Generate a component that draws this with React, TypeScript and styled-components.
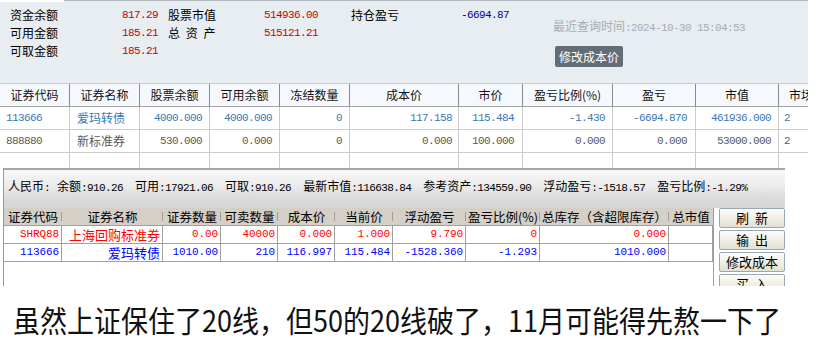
import React from "react";
import styled, { createGlobalStyle } from "styled-components";

const CJK = `"Noto Sans CJK SC", "Liberation Sans", sans-serif`;
const MONO = `"Liberation Mono", "DejaVu Sans Mono", monospace`;

const GlobalStyle = createGlobalStyle`
  html, body { margin: 0; padding: 0; background: #ffffff; }
  body { font-family: ${CJK}; }
  * { box-sizing: border-box; }
`;

type Align = "left" | "right" | "center";
type Tone = "blue" | "grey" | "red" | "navy" | "none";

const toneColor: Record<Tone, string> = {
  blue: "#3a77b3",
  grey: "#5a5a5a",
  red: "#ff0000",
  navy: "#0000ff",
  none: "#000000",
};

const Page = styled.div`
  width: 819px;
  height: 353px;
  overflow: hidden;
  background: #ffffff;
  display: flex;
  flex-direction: column;
`;

/* ---------- top summary panel ---------- */
const TopPanel = styled.section`
  width: 808px;
  height: 83px;
  flex-shrink: 0;
  background: #e8edf1;
  display: flex;
  flex-direction: column;
`;

const TabEdge = styled.div`
  display: flex;
  height: 2px;
`;

const TabGap = styled.div`
  width: 64px;
  background: #ffffff;
`;

const TabLine = styled.div`
  flex: 1;
  border-top: 1px solid #b3bac2;
`;

const SummaryBody = styled.div`
  display: flex;
  padding: 4px 0 0 10px;
`;

const SummaryGrid = styled.div`
  display: grid;
  grid-template-columns: 60px 88px 70px 90px 93px 98px;
  grid-auto-rows: 18px;
  align-items: center;
`;

const SumLabel = styled.span<{ $indent?: number }>`
  font-family: ${CJK};
  font-size: 12px;
  line-height: 18px;
  color: #000;
  padding-left: ${(p) => p.$indent ?? 0}px;
  white-space: nowrap;
  word-spacing: 3px;
`;

const SumValue = styled.span<{ $tone: Tone }>`
  font-family: ${MONO};
  font-size: 11px;
  letter-spacing: -0.6px;
  line-height: 18px;
  text-align: right;
  color: ${(p) => (p.$tone === "navy" ? "#0000a8" : "#c80000")};
  white-space: nowrap;
`;

const InfoColumn = styled.div`
  display: flex;
  flex-direction: column;
  align-items: flex-start;
  margin-left: 44px;
  padding-top: 10px;
`;

const QueryTime = styled.div`
  color: #a6aeb6;
  line-height: 16px;
  white-space: nowrap;
`;

const QLabel = styled.span`
  font-family: ${CJK};
  font-size: 12px;
`;

const QNum = styled.span`
  font-family: ${MONO};
  font-size: 11px;
  letter-spacing: -0.6px;
`;

const CostButton = styled.button`
  margin: 10px 0 0 2px;
  height: 21px;
  padding: 0 4px;
  border: none;
  border-radius: 2px;
  background: #636d77;
  color: #ffffff;
  font-family: ${CJK};
  font-size: 12px;
  line-height: 21px;
  display: inline-flex;
  align-items: center;
`;

/* ---------- position table ---------- */
const Table1Wrap = styled.section`
  width: 808px;
  height: 85px;
  flex-shrink: 0;
  overflow: hidden;
  border-top: 1px solid #c6ccd2;
`;

const GridRow = styled.div<{ $cols: string; $h: number }>`
  display: grid;
  grid-template-columns: ${(p) => p.$cols};
  height: ${(p) => p.$h}px;
  width: max-content;
`;

const T1Head = styled.div`
  background: #f5f9fd;
  border-right: 1px solid #8a8a8a;
  border-bottom: 1px solid #a4a4a4;
  font-family: ${CJK};
  font-size: 12px;
  line-height: 22px;
  text-align: center;
  color: #111;
  white-space: nowrap;
  overflow: hidden;
`;

const T1Cell = styled.div<{ $align: Align; $mono: boolean; $pad: number; $tone: Tone }>`
  border-right: 1px solid #cbcbcb;
  border-bottom: 1px solid #cbcbcb;
  background: #ffffff;
  line-height: 22px;
  white-space: nowrap;
  overflow: hidden;
  text-align: ${(p) => p.$align};
  padding-left: ${(p) => (p.$align === "left" ? p.$pad : 0)}px;
  padding-right: ${(p) => (p.$align === "right" ? p.$pad : 0)}px;
  font-family: ${(p) => (p.$mono ? MONO : CJK)};
  font-size: ${(p) => (p.$mono ? 11 : 12)}px;
  letter-spacing: ${(p) => (p.$mono ? "-0.6px" : "0")};
  color: ${(p) => toneColor[p.$tone]};
`;

/* ---------- lower trade window ---------- */
const LowerWindow = styled.section`
  margin-left: 3px;
  width: 782px;
  height: 118px;
  flex-shrink: 0;
  border-left: 1px solid #9a9a9a;
  border-top: 2px solid #a6a6a6;
  display: flex;
  flex-direction: column;
  background: #ffffff;
`;

const StatusBar = styled.div`
  height: 38px;
  flex-shrink: 0;
  display: flex;
  align-items: flex-start;
  padding: 6px 0 0 4px;
  background: linear-gradient(#f7f7f7 0%, #ececec 40%, #dadada 75%, #d6d6d6 100%);
  line-height: 16px;
  white-space: nowrap;
`;

const Currency = styled.span`
  margin-right: 7px;
`;

const StatusItems = styled.div`
  display: flex;
  gap: 12px;
`;

const SLabel = styled.span`
  font-family: ${CJK};
  font-size: 12px;
  color: #000;
`;

const SNum = styled.span`
  font-family: ${MONO};
  font-size: 11px;
  letter-spacing: -0.6px;
  color: #000;
`;

const WindowBody = styled.div`
  flex: 1;
  display: flex;
  min-height: 0;
`;

const Table2Area = styled.div`
  width: 710px;
  border-right: 1px solid #9c9c9c;
  background: #ffffff;
`;

const T2Head = styled.div<{ $tick: boolean }>`
  position: relative;
  background: #d4d0c8;
  border-bottom: 1px solid #a0a0a0;
  font-family: ${CJK};
  font-size: 12.5px;
  line-height: 17px;
  text-align: center;
  color: #000;
  white-space: nowrap;
  overflow: hidden;
  &::after {
    content: "";
    display: ${(p) => (p.$tick ? "block" : "none")};
    position: absolute;
    right: 0;
    top: 4px;
    bottom: 4px;
    width: 1px;
    background: #a29e96;
  }
`;

const T2Cell = styled.div<{ $mono: boolean; $tone: Tone }>`
  border-right: 1px solid #a0a0a0;
  border-bottom: 1px solid #a0a0a0;
  text-align: right;
  padding-right: 2px;
  line-height: 17px;
  white-space: nowrap;
  overflow: hidden;
  font-family: ${(p) => (p.$mono ? MONO : CJK)};
  font-size: ${(p) => (p.$mono ? 11 : 13)}px;
  letter-spacing: ${(p) => (p.$mono ? "-0.1px" : "0")};
  color: ${(p) => toneColor[p.$tone]};
`;

const ButtonColumn = styled.div`
  width: 71px;
  padding-left: 5px;
  display: flex;
  flex-direction: column;
  gap: 2px;
`;

const ActionButton = styled.button`
  width: 66px;
  height: 20px;
  flex-shrink: 0;
  padding: 0;
  border: 1px solid #97a8b8;
  border-radius: 2px;
  background: linear-gradient(#fdfdf9, #eeede3 60%, #e2e0d2);
  font-family: ${CJK};
  font-size: 13px;
  line-height: 18px;
  color: #000;
  text-align: center;
  white-space: pre;
  word-spacing: 3px;
`;

/* ---------- caption ---------- */
const CaptionArea = styled.div`
  flex: 1;
  display: flex;
  align-items: center;
  padding-left: 13px;
  background: #ffffff;
`;

const Caption = styled.p`
  margin: 0;
  font-family: ${CJK};
  font-size: 27px;
  line-height: 30px;
  color: #111111;
  white-space: nowrap;
  transform: scaleY(1.1);
  transform-origin: left center;
`;

/* ---------- data ---------- */
interface ColDef {
  w: number;
  align: Align;
  mono: boolean;
  pad: number;
}

const t1Cols: ColDef[] = [
  { w: 70, align: "left", mono: true, pad: 6 },
  { w: 70, align: "left", mono: false, pad: 7 },
  { w: 70, align: "right", mono: true, pad: 7 },
  { w: 70, align: "right", mono: true, pad: 7 },
  { w: 70, align: "right", mono: true, pad: 7 },
  { w: 109, align: "right", mono: true, pad: 6 },
  { w: 64, align: "right", mono: true, pad: 8 },
  { w: 90, align: "right", mono: true, pad: 7 },
  { w: 83, align: "right", mono: true, pad: 8 },
  { w: 83, align: "right", mono: true, pad: 7 },
  { w: 45, align: "left", mono: true, pad: 5 },
];
const t1Template = t1Cols.map((c) => `${c.w}px`).join(" ");
const t1Heads = ["证券代码", "证券名称", "股票余额", "可用余额", "冻结数量", "成本价", "市价", "盈亏比例(%)", "盈亏", "市值", "市场"];
const t1Rows: { tone: Tone; cells: string[] }[] = [
  { tone: "blue", cells: ["113666", "爱玛转债", "4000.000", "4000.000", "0", "117.158", "115.484", "-1.430", "-6694.870", "461936.000", "2"] },
  { tone: "grey", cells: ["888880", "新标准券", "530.000", "0.000", "0", "0.000", "100.000", "0.000", "0.000", "53000.000", "2"] },
  { tone: "grey", cells: ["", "", "", "", "", "", "", "", "", "", ""] },
];

const t2Widths = [58, 101, 58, 57, 57, 58, 73, 74, 129, 44];
const t2Template = t2Widths.map((w) => `${w}px`).join(" ");
const t2Heads = ["证券代码", "证券名称", "证券数量", "可卖数量", "成本价", "当前价", "浮动盈亏", "盈亏比例(%)", "总库存（含超限库存）", "总市值"];
const t2Rows: { tone: Tone; cells: string[] }[] = [
  { tone: "red", cells: ["SHRQ88", "上海回购标准券", "0.00", "40000", "0.000", "1.000", "9.790", "0", "0.000", ""] },
  { tone: "navy", cells: ["113666", "爱玛转债", "1010.00", "210", "116.997", "115.484", "-1528.360", "-1.293", "1010.000", ""] },
];

const statusItems: [string, string][] = [
  ["余额", ":910.26"],
  ["可用", ":17921.06"],
  ["可取", ":910.26"],
  ["最新市值", ":116638.84"],
  ["参考资产", ":134559.90"],
  ["浮动盈亏", ":-1518.57"],
  ["盈亏比例", ":-1.29%"],
];

const isCJK = (s: string) => /[\u4e00-\u9fff\uff08\uff09]/.test(s);

export default function App() {
  return (
    <Page>
      <GlobalStyle />
      <TopPanel>
        <TabEdge>
          <TabGap />
          <TabLine />
        </TabEdge>
        <SummaryBody>
          <SummaryGrid>
            <SumLabel>资金余额</SumLabel>
            <SumValue $tone="red">817.29</SumValue>
            <SumLabel $indent={10}>股票市值</SumLabel>
            <SumValue $tone="red">514936.00</SumValue>
            <SumLabel $indent={33}>持仓盈亏</SumLabel>
            <SumValue $tone="navy">-6694.87</SumValue>

            <SumLabel>可用金额</SumLabel>
            <SumValue $tone="red">185.21</SumValue>
            <SumLabel $indent={10}>总 资 产</SumLabel>
            <SumValue $tone="red">515121.21</SumValue>
            <span />
            <span />

            <SumLabel>可取金额</SumLabel>
            <SumValue $tone="red">185.21</SumValue>
          </SummaryGrid>
          <InfoColumn>
            <QueryTime>
              <QLabel>最近查询时间</QLabel>
              <QNum>:2024-10-30 15:04:53</QNum>
            </QueryTime>
            <CostButton>修改成本价</CostButton>
          </InfoColumn>
        </SummaryBody>
      </TopPanel>

      <Table1Wrap>
        <GridRow $cols={t1Template} $h={23}>
          {t1Heads.map((h) => (
            <T1Head key={h}>{h}</T1Head>
          ))}
        </GridRow>
        {t1Rows.map((r, ri) => (
          <GridRow key={ri} $cols={t1Template} $h={23}>
            {r.cells.map((c, ci) => (
              <T1Cell
                key={ci}
                $align={t1Cols[ci].align}
                $mono={t1Cols[ci].mono}
                $pad={t1Cols[ci].pad}
                $tone={r.tone}
              >
                {c}
              </T1Cell>
            ))}
          </GridRow>
        ))}
      </Table1Wrap>

      <LowerWindow>
        <StatusBar>
          <Currency>
            <SLabel>人民币</SLabel>
            <SNum>:</SNum>
          </Currency>
          <StatusItems>
            {statusItems.map(([l, v]) => (
              <span key={l}>
                <SLabel>{l}</SLabel>
                <SNum>{v}</SNum>
              </span>
            ))}
          </StatusItems>
        </StatusBar>
        <WindowBody>
          <Table2Area>
            <GridRow $cols={t2Template} $h={18}>
              {t2Heads.map((h, i) => (
                <T2Head key={h} $tick={i < t2Heads.length - 1}>
                  {h}
                </T2Head>
              ))}
            </GridRow>
            {t2Rows.map((r, ri) => (
              <GridRow key={ri} $cols={t2Template} $h={18}>
                {r.cells.map((c, ci) => (
                  <T2Cell key={ci} $mono={!isCJK(c)} $tone={r.tone}>
                    {c}
                  </T2Cell>
                ))}
              </GridRow>
            ))}
          </Table2Area>
          <ButtonColumn>
            <ActionButton>刷 新</ActionButton>
            <ActionButton>输 出</ActionButton>
            <ActionButton>修改成本</ActionButton>
            <ActionButton>买 入</ActionButton>
          </ButtonColumn>
        </WindowBody>
      </LowerWindow>

      <CaptionArea>
        <Caption>虽然上证保住了20线，但50的20线破了，11月可能得先熬一下了</Caption>
      </CaptionArea>
    </Page>
  );
}
